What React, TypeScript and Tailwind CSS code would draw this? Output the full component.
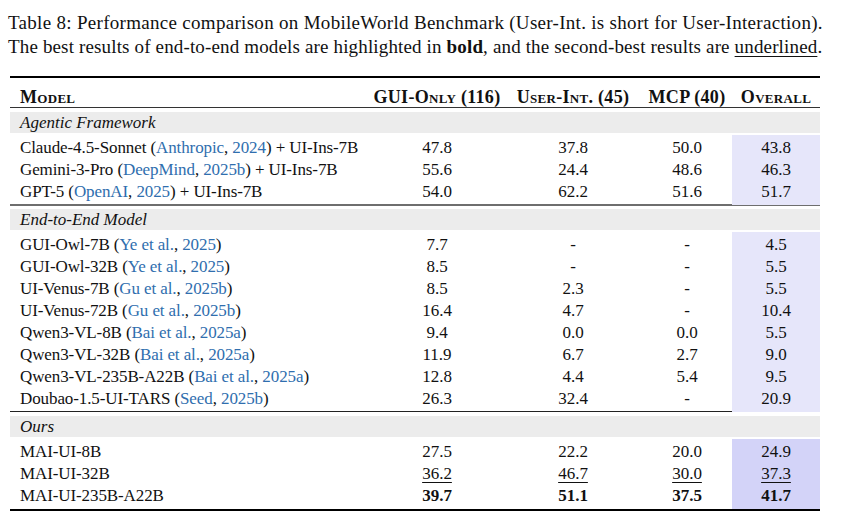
import React from 'react';

type Row = {
  name: string;
  cite?: { who: string; year: string };
  suffix?: string;
  gui: string;
  user: string;
  mcp: string;
  overall: string;
  style?: 'bold' | 'under';
};

type Section = {
  title: string;
  tint: string;
  rows: Row[];
};

const sections: Section[] = [
  {
    title: 'Agentic Framework',
    tint: 'bg-[#e6e6fa]',
    rows: [
      { name: 'Claude-4.5-Sonnet', cite: { who: 'Anthropic', year: '2024' }, suffix: ' + UI-Ins-7B', gui: '47.8', user: '37.8', mcp: '50.0', overall: '43.8' },
      { name: 'Gemini-3-Pro', cite: { who: 'DeepMind', year: '2025b' }, suffix: ' + UI-Ins-7B', gui: '55.6', user: '24.4', mcp: '48.6', overall: '46.3' },
      { name: 'GPT-5', cite: { who: 'OpenAI', year: '2025' }, suffix: ' + UI-Ins-7B', gui: '54.0', user: '62.2', mcp: '51.6', overall: '51.7' },
    ],
  },
  {
    title: 'End-to-End Model',
    tint: 'bg-[#e6e6fa]',
    rows: [
      { name: 'GUI-Owl-7B', cite: { who: 'Ye et al.', year: '2025' }, gui: '7.7', user: '-', mcp: '-', overall: '4.5' },
      { name: 'GUI-Owl-32B', cite: { who: 'Ye et al.', year: '2025' }, gui: '8.5', user: '-', mcp: '-', overall: '5.5' },
      { name: 'UI-Venus-7B', cite: { who: 'Gu et al.', year: '2025b' }, gui: '8.5', user: '2.3', mcp: '-', overall: '5.5' },
      { name: 'UI-Venus-72B', cite: { who: 'Gu et al.', year: '2025b' }, gui: '16.4', user: '4.7', mcp: '-', overall: '10.4' },
      { name: 'Qwen3-VL-8B', cite: { who: 'Bai et al.', year: '2025a' }, gui: '9.4', user: '0.0', mcp: '0.0', overall: '5.5' },
      { name: 'Qwen3-VL-32B', cite: { who: 'Bai et al.', year: '2025a' }, gui: '11.9', user: '6.7', mcp: '2.7', overall: '9.0' },
      { name: 'Qwen3-VL-235B-A22B', cite: { who: 'Bai et al.', year: '2025a' }, gui: '12.8', user: '4.4', mcp: '5.4', overall: '9.5' },
      { name: 'Doubao-1.5-UI-TARS', cite: { who: 'Seed', year: '2025b' }, gui: '26.3', user: '32.4', mcp: '-', overall: '20.9' },
    ],
  },
  {
    title: 'Ours',
    tint: 'bg-[#d3d3f8]',
    rows: [
      { name: 'MAI-UI-8B', gui: '27.5', user: '22.2', mcp: '20.0', overall: '24.9' },
      { name: 'MAI-UI-32B', gui: '36.2', user: '46.7', mcp: '30.0', overall: '37.3', style: 'under' },
      { name: 'MAI-UI-235B-A22B', gui: '39.7', user: '51.1', mcp: '37.5', overall: '41.7', style: 'bold' },
    ],
  },
];

const cols = 'grid grid-cols-[360px_134px_138px_90px_88px]';

const Val: React.FC<{ v: string; style?: Row['style'] }> = ({ v, style }) => (
  <span
    className={
      style === 'bold'
        ? 'font-bold'
        : style === 'under'
          ? 'underline decoration-1 underline-offset-[3px]'
          : ''
    }
  >
    {v}
  </span>
);

const DataRow: React.FC<{ row: Row; tint: string }> = ({ row, tint }) => (
  <div className={`${cols} h-[22px] items-center`}>
    <div className="pl-[10px] whitespace-nowrap tracking-[-0.1px]">
      {row.name}
      {row.cite && (
        <>
          {' ('}
          <span className="text-[#2f6eae]">{row.cite.who}</span>,{' '}
          <span className="text-[#2f6eae]">{row.cite.year}</span>)
        </>
      )}
      {row.suffix}
    </div>
    <div className="text-center">
      <Val v={row.gui} style={row.style} />
    </div>
    <div className="text-center">
      <Val v={row.user} style={row.style} />
    </div>
    <div className="text-center">
      <Val v={row.mcp} style={row.style} />
    </div>
    <div className={`${tint} h-full flex items-center justify-center`}>
      <Val v={row.overall} style={row.style} />
    </div>
  </div>
);

export default function App() {
  return (
    <div className="w-[843px] h-[525px] bg-white text-[#111] font-['Liberation_Serif',serif] overflow-hidden">
      <div className="pl-[8px] pt-[11px] text-[19px] leading-[24px]">
        <p className="tracking-[0.3px]">
          Table 8: Performance comparison on MobileWorld Benchmark (User-Int. is short for User-Interaction).
        </p>
        <p className="tracking-[0.15px]">
          The best results of end-to-end models are highlighted in <span className="font-bold">bold</span>, and the
          second-best results are <span className="underline decoration-1 underline-offset-[3px]">underlined</span>.
        </p>
      </div>

      <div className="ml-[10px] mt-[17px] w-[810px] text-[17px]">
        <div className="h-[2px] bg-black" />
        <div className={`${cols} h-[29px] items-center pt-[8px] leading-[20px] text-[18px] font-bold [font-variant:small-caps] tracking-[0.3px] whitespace-nowrap`}>
          <div className="pl-[10px]">Model</div>
          <div className="text-center">GUI-Only (116)</div>
          <div className="text-center">User-Int. (45)</div>
          <div className="text-center">MCP (40)</div>
          <div className="text-center">Overall</div>
        </div>
        <div className="h-px bg-[#333]" />

        {sections.map((s, i) => (
          <div key={s.title}>
            {i === 1 && (
              <div className="py-[3px]">
                <div className="h-[2px] bg-[#6e6e6e]" />
              </div>
            )}
            {i === 2 && (
              <div className="pt-[3px] pb-[4px]">
                <div className="h-px bg-[#222]" />
              </div>
            )}
            <div className={`${i === 0 ? 'mt-[4px]' : ''} h-[21px] bg-[#ececec] pl-[10px] italic flex items-center`}>
              {s.title}
            </div>
            <div className="h-[2px]" />
            {s.rows.map((r) => (
              <DataRow key={r.name} row={r} tint={s.tint} />
            ))}
          </div>
        ))}

        <div className="mt-[4px] h-[2px] bg-black" />
      </div>
    </div>
  );
}
